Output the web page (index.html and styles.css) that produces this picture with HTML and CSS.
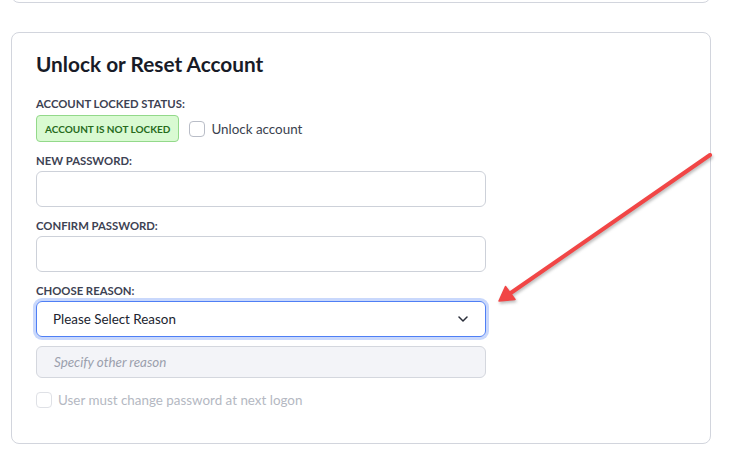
FILE: index.html
```html
<!DOCTYPE html>
<html lang="en">
<head>
<meta charset="utf-8">
<title>Unlock or Reset Account</title>
<link rel="stylesheet" href="styles.css">
</head>
<body>
<div class="page">
  <div class="card card-prev"></div>
  <section class="card">
    <h2 class="title">Unlock or Reset Account</h2>

    <div class="field">
      <div class="label">ACCOUNT LOCKED STATUS:</div>
      <div class="status-row">
        <span class="badge">ACCOUNT IS NOT LOCKED</span>
        <label class="check">
          <span class="box"></span>
          <span>Unlock account</span>
        </label>
      </div>
    </div>

    <div class="field">
      <div class="label">NEW PASSWORD:</div>
      <div class="input"></div>
    </div>

    <div class="field">
      <div class="label">CONFIRM PASSWORD:</div>
      <div class="input"></div>
    </div>

    <div class="field">
      <div class="label">CHOOSE REASON:</div>
      <div class="select">
        <span>Please Select Reason</span>
        <svg class="chev" width="10" height="6" viewBox="0 0 10 6"><path d="M1 1 L5 5 L9 1" fill="none" stroke="#2a2e3a" stroke-width="1.5" stroke-linecap="round" stroke-linejoin="round"/></svg>
      </div>
      <div class="input other">Specify other reason</div>
    </div>

    <label class="check disabled">
      <span class="box"></span>
      <span>User must change password at next logon</span>
    </label>
  </section>
</div>

<svg class="arrow" width="731" height="469" viewBox="0 0 731 469">
  <line x1="710" y1="155" x2="510" y2="293.5" stroke="#f14646" stroke-width="4" stroke-linecap="round"/>
  <polygon points="499,301 505.5,286.5 515,299.5" fill="#f14646" stroke="#f14646" stroke-width="1.5" stroke-linejoin="round"/>
</svg>
</body>
</html>
```

FILE: styles.css
```css
* { box-sizing: border-box; }

html, body {
  margin: 0;
  background: #ffffff;
}

body {
  font-family: Lato, "Noto Sans", sans-serif;
  color: #1b1e2a;
  width: 731px;
  height: 469px;
  overflow: hidden;
  position: relative;
}

.page {
  padding: 0 20px 0 11px;
}

.card {
  border: 1px solid #d2d5dd;
  border-radius: 8px;
  background: #fff;
  padding: 19px 24px 35px 24px;
}

.card-prev {
  height: 40px;
  margin-top: -37px;
  margin-bottom: 29px;
  padding: 0;
}

.title {
  margin: 0 0 20px 0;
  font-size: 20.8px;
  line-height: 24px;
  font-weight: 700;
  color: #181b27;
}

.field {
  display: flex;
  flex-direction: column;
  gap: 2px;
  margin-bottom: 11px;
  width: 450px;
}

.label {
  font-size: 11.3px;
  line-height: 16px;
  font-weight: 700;
  color: #3d4253;
}

.status-row {
  display: flex;
  align-items: center;
  gap: 10px;
  margin-top: 1px;
}

.badge {
  display: inline-flex;
  align-items: center;
  height: 27px;
  padding: 0 8px;
  border: 1px solid #93d98a;
  border-radius: 4px;
  background: #d9fad2;
  color: #276b1c;
  font-size: 10px;
  font-weight: 700;
}

.check {
  display: flex;
  align-items: center;
  gap: 6px;
  font-size: 13.4px;
  color: #3a3f4e;
}

.box {
  width: 16px;
  height: 16px;
  border: 1px solid #b9bdc7;
  border-radius: 4px;
  background: #fff;
}

.input {
  height: 36px;
  border: 1px solid #cdd1d9;
  border-radius: 6px;
  background: #fff;
}

.select {
  height: 36px;
  border: 1px solid #4f7ff5;
  border-radius: 6px;
  box-shadow: 0 0 0 3px #c9d8fc;
  display: flex;
  align-items: center;
  justify-content: space-between;
  padding: 0 17px 0 16px;
  font-size: 13.4px;
  color: #20232e;
}

.chev {
  display: block;
}

.other {
  margin-top: 7px;
  height: 32px;
  background: #f3f4f8;
  border-color: #d4d7de;
  display: flex;
  align-items: center;
  padding-left: 17px;
  font-size: 13.4px;
  font-style: italic;
  color: #9ba0ad;
}

.check.disabled {
  margin-top: 14px;
  color: #b4b8c2;
}

.check.disabled .box {
  border-color: #dfe1e6;
}

.arrow {
  position: absolute;
  left: 0;
  top: 0;
  pointer-events: none;
  filter: drop-shadow(1px 2px 1.5px rgba(60, 60, 60, 0.35));
}
```
